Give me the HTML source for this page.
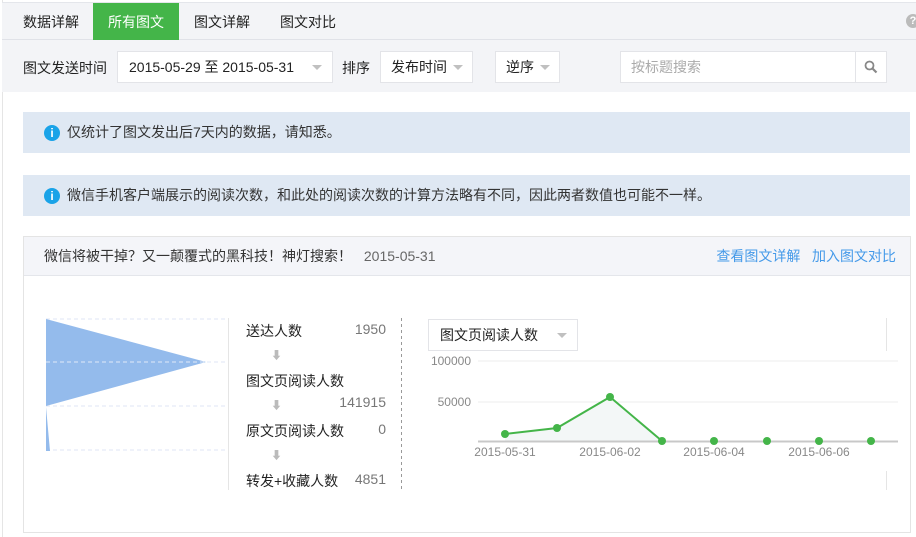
<!DOCTYPE html>
<html><head><meta charset="utf-8"><style>
*{margin:0;padding:0;box-sizing:border-box}
body{width:916px;height:537px;background:#fff;font-family:"Liberation Sans","Noto Sans CJK SC",sans-serif;font-size:14px;color:#222;position:relative;overflow:hidden}
.a{position:absolute}
.nav{left:2px;top:2px;width:914px;height:38px;background:#f3f4f7;border-top:1px solid #e4e6eb;border-bottom:1px solid #e0e2e8}
.tab{position:absolute;top:0;height:38px;line-height:38px;font-size:14px;color:#222}
.filter{left:2px;top:40px;width:914px;height:52px;background:#f3f4f7}
.box{position:absolute;background:#fff;border:1px solid #e3e4e8;height:32px;line-height:30px;font-size:14px}
.caret{position:absolute;width:0;height:0;border-left:5px solid transparent;border-right:5px solid transparent;border-top:5px solid #c0c0c0}
.info{left:23px;width:887px;height:41px;background:#dfe8f3;line-height:41px;padding-left:44px;font-size:14px;color:#333}
.ic{position:absolute;left:21px;top:13px;width:16px;height:16px;border-radius:50%;background:#1aa3e8;color:#fff;font-size:12px;font-weight:bold;line-height:16px;text-align:center}
.lbl{position:absolute;font-size:14px;color:#222}
.num{position:absolute;font-size:14px;color:#777;text-align:right;width:60px}
.arr{position:absolute;color:#bbb;font-size:11px}
</style></head><body>
<div class="a" style="left:2px;top:0;width:1px;height:537px;background:#e5e5e5"></div>
<div class="a nav">
<span class="tab" style="left:21px">数据详解</span>
<span class="tab" style="left:91px;width:86px;background:#44b549;color:#fff;text-align:center">所有图文</span>
<span class="tab" style="left:192px">图文详解</span>
<span class="tab" style="left:278px">图文对比</span>
<div class="a" style="left:904px;top:11px;width:14px;height:14px;border-radius:50%;background:#bbb;color:#fff;font-size:11px;font-weight:bold;line-height:14px;text-align:center">?</div>
</div>
<div class="a filter">
<span class="lbl" style="left:21px;top:18px">图文发送时间</span>
<div class="box" style="left:115px;top:11px;width:216px;padding-left:11px">2015-05-29 至 2015-05-31<div class="caret" style="left:194px;top:13px"></div></div>
<span class="lbl" style="left:340px;top:18px">排序</span>
<div class="box" style="left:378px;top:11px;width:93px;padding-left:10px">发布时间<div class="caret" style="left:72px;top:13px"></div></div>
<div class="box" style="left:493px;top:11px;width:65px;padding-left:10px">逆序<div class="caret" style="left:44px;top:13px"></div></div>
<div class="box" style="left:618px;top:11px;width:267px;padding-left:10px;color:#aaa">按标题搜索
<div class="a" style="left:234px;top:0;width:1px;height:30px;background:#e3e4e8"></div>
<svg class="a" style="left:243px;top:8px" width="14" height="14" viewBox="0 0 14 14"><circle cx="5.5" cy="5.5" r="4" fill="none" stroke="#888" stroke-width="1.8"/><path d="M8.5 8.5L12.5 12.5" stroke="#888" stroke-width="2.2"/></svg>
</div>
</div>
<div class="a info" style="top:112px"><span class="ic">i</span>仅统计了图文发出后7天内的数据，请知悉。</div>
<div class="a info" style="top:175px"><span class="ic">i</span>微信手机客户端展示的阅读次数，和此处的阅读次数的计算方法略有不同，因此两者数值也可能不一样。</div>
<div class="a" style="left:23px;top:236px;width:888px;height:297px;border:1px solid #e4e4e4">
<div class="a" style="left:0;top:0;width:886px;height:39px;background:#f4f5f9;border-bottom:1px solid #e4e6eb;line-height:39px;font-size:14px;color:#333;padding-left:20px">微信将被干掉？又一颠覆式的黑科技！神灯搜索！ <span style="color:#666;margin-left:8px">2015-05-31</span>
<span class="a" style="right:14px;top:0;color:#459ae9">查看图文详解&nbsp;&nbsp;&nbsp;加入图文对比</span></div>
</div>
<svg class="a" style="left:0;top:300px" width="916" height="237">
<g stroke="#dfe6f5" stroke-dasharray="4,3"><line x1="46" y1="19" x2="226" y2="19"/><line x1="46" y1="62" x2="226" y2="62"/><line x1="46" y1="106" x2="226" y2="106"/><line x1="46" y1="150" x2="226" y2="150"/></g>
<polygon points="46,19 206,62 46,106" fill="#94bbec"/>
<polygon points="46,107 50,151 46,151" fill="#94bbec"/>
<line x1="46" y1="62" x2="210" y2="62" stroke="#dfe8f8" stroke-dasharray="4,3"/>
<line x1="228.5" y1="18" x2="228.5" y2="190" stroke="#e5e5e5"/>
<line x1="401.5" y1="18" x2="401.5" y2="190" stroke="#999" stroke-dasharray="3,3"/>
<line x1="886.5" y1="18" x2="886.5" y2="51" stroke="#e5e5e5"/>
<line x1="886.5" y1="171" x2="886.5" y2="190" stroke="#e5e5e5"/>
<line x1="478" y1="61" x2="898" y2="61" stroke="#eee"/>
<line x1="478" y1="102" x2="898" y2="102" stroke="#eee"/>
<polygon points="505,134 557,128 610,97 662,141 505,141" fill="#f3f7f7"/>
<line x1="478" y1="141.5" x2="898" y2="141.5" stroke="#c8c8c8" stroke-width="2"/>
<polyline points="505,134 557,128 610,97 662,141" fill="none" stroke="#44b549" stroke-width="2"/>
<g fill="#44b549"><circle cx="505" cy="134" r="4"/><circle cx="557" cy="128" r="4"/><circle cx="610" cy="97" r="4"/><circle cx="662" cy="141" r="4"/><circle cx="714" cy="141" r="4"/><circle cx="767" cy="141" r="4"/><circle cx="819" cy="141" r="4"/><circle cx="871" cy="141" r="4"/></g>
<g font-size="12" fill="#888" font-family="Liberation Sans,sans-serif"><text x="471" y="65" text-anchor="end">100000</text><text x="471" y="106" text-anchor="end">50000</text>
<text x="505" y="156" text-anchor="middle">2015-05-31</text><text x="610" y="156" text-anchor="middle">2015-06-02</text><text x="714" y="156" text-anchor="middle">2015-06-04</text><text x="819" y="156" text-anchor="middle">2015-06-06</text></g>
</svg>
<span class="lbl" style="left:246px;top:321px">送达人数</span><span class="num" style="left:326px;top:321px">1950</span>
<span class="arr" style="left:271px;top:347px">⬇</span>
<span class="lbl" style="left:246px;top:371px">图文页阅读人数</span><span class="num" style="left:326px;top:394px">141915</span>
<span class="arr" style="left:271px;top:397px">⬇</span>
<span class="lbl" style="left:246px;top:421px">原文页阅读人数</span><span class="num" style="left:326px;top:421px">0</span>
<span class="arr" style="left:271px;top:447px">⬇</span>
<span class="lbl" style="left:246px;top:471px">转发+收藏人数</span><span class="num" style="left:326px;top:471px">4851</span>
<div class="box" style="left:428px;top:319px;width:150px;padding-left:11px">图文页阅读人数<div class="caret" style="left:128px;top:13px"></div></div>
</body></html>
